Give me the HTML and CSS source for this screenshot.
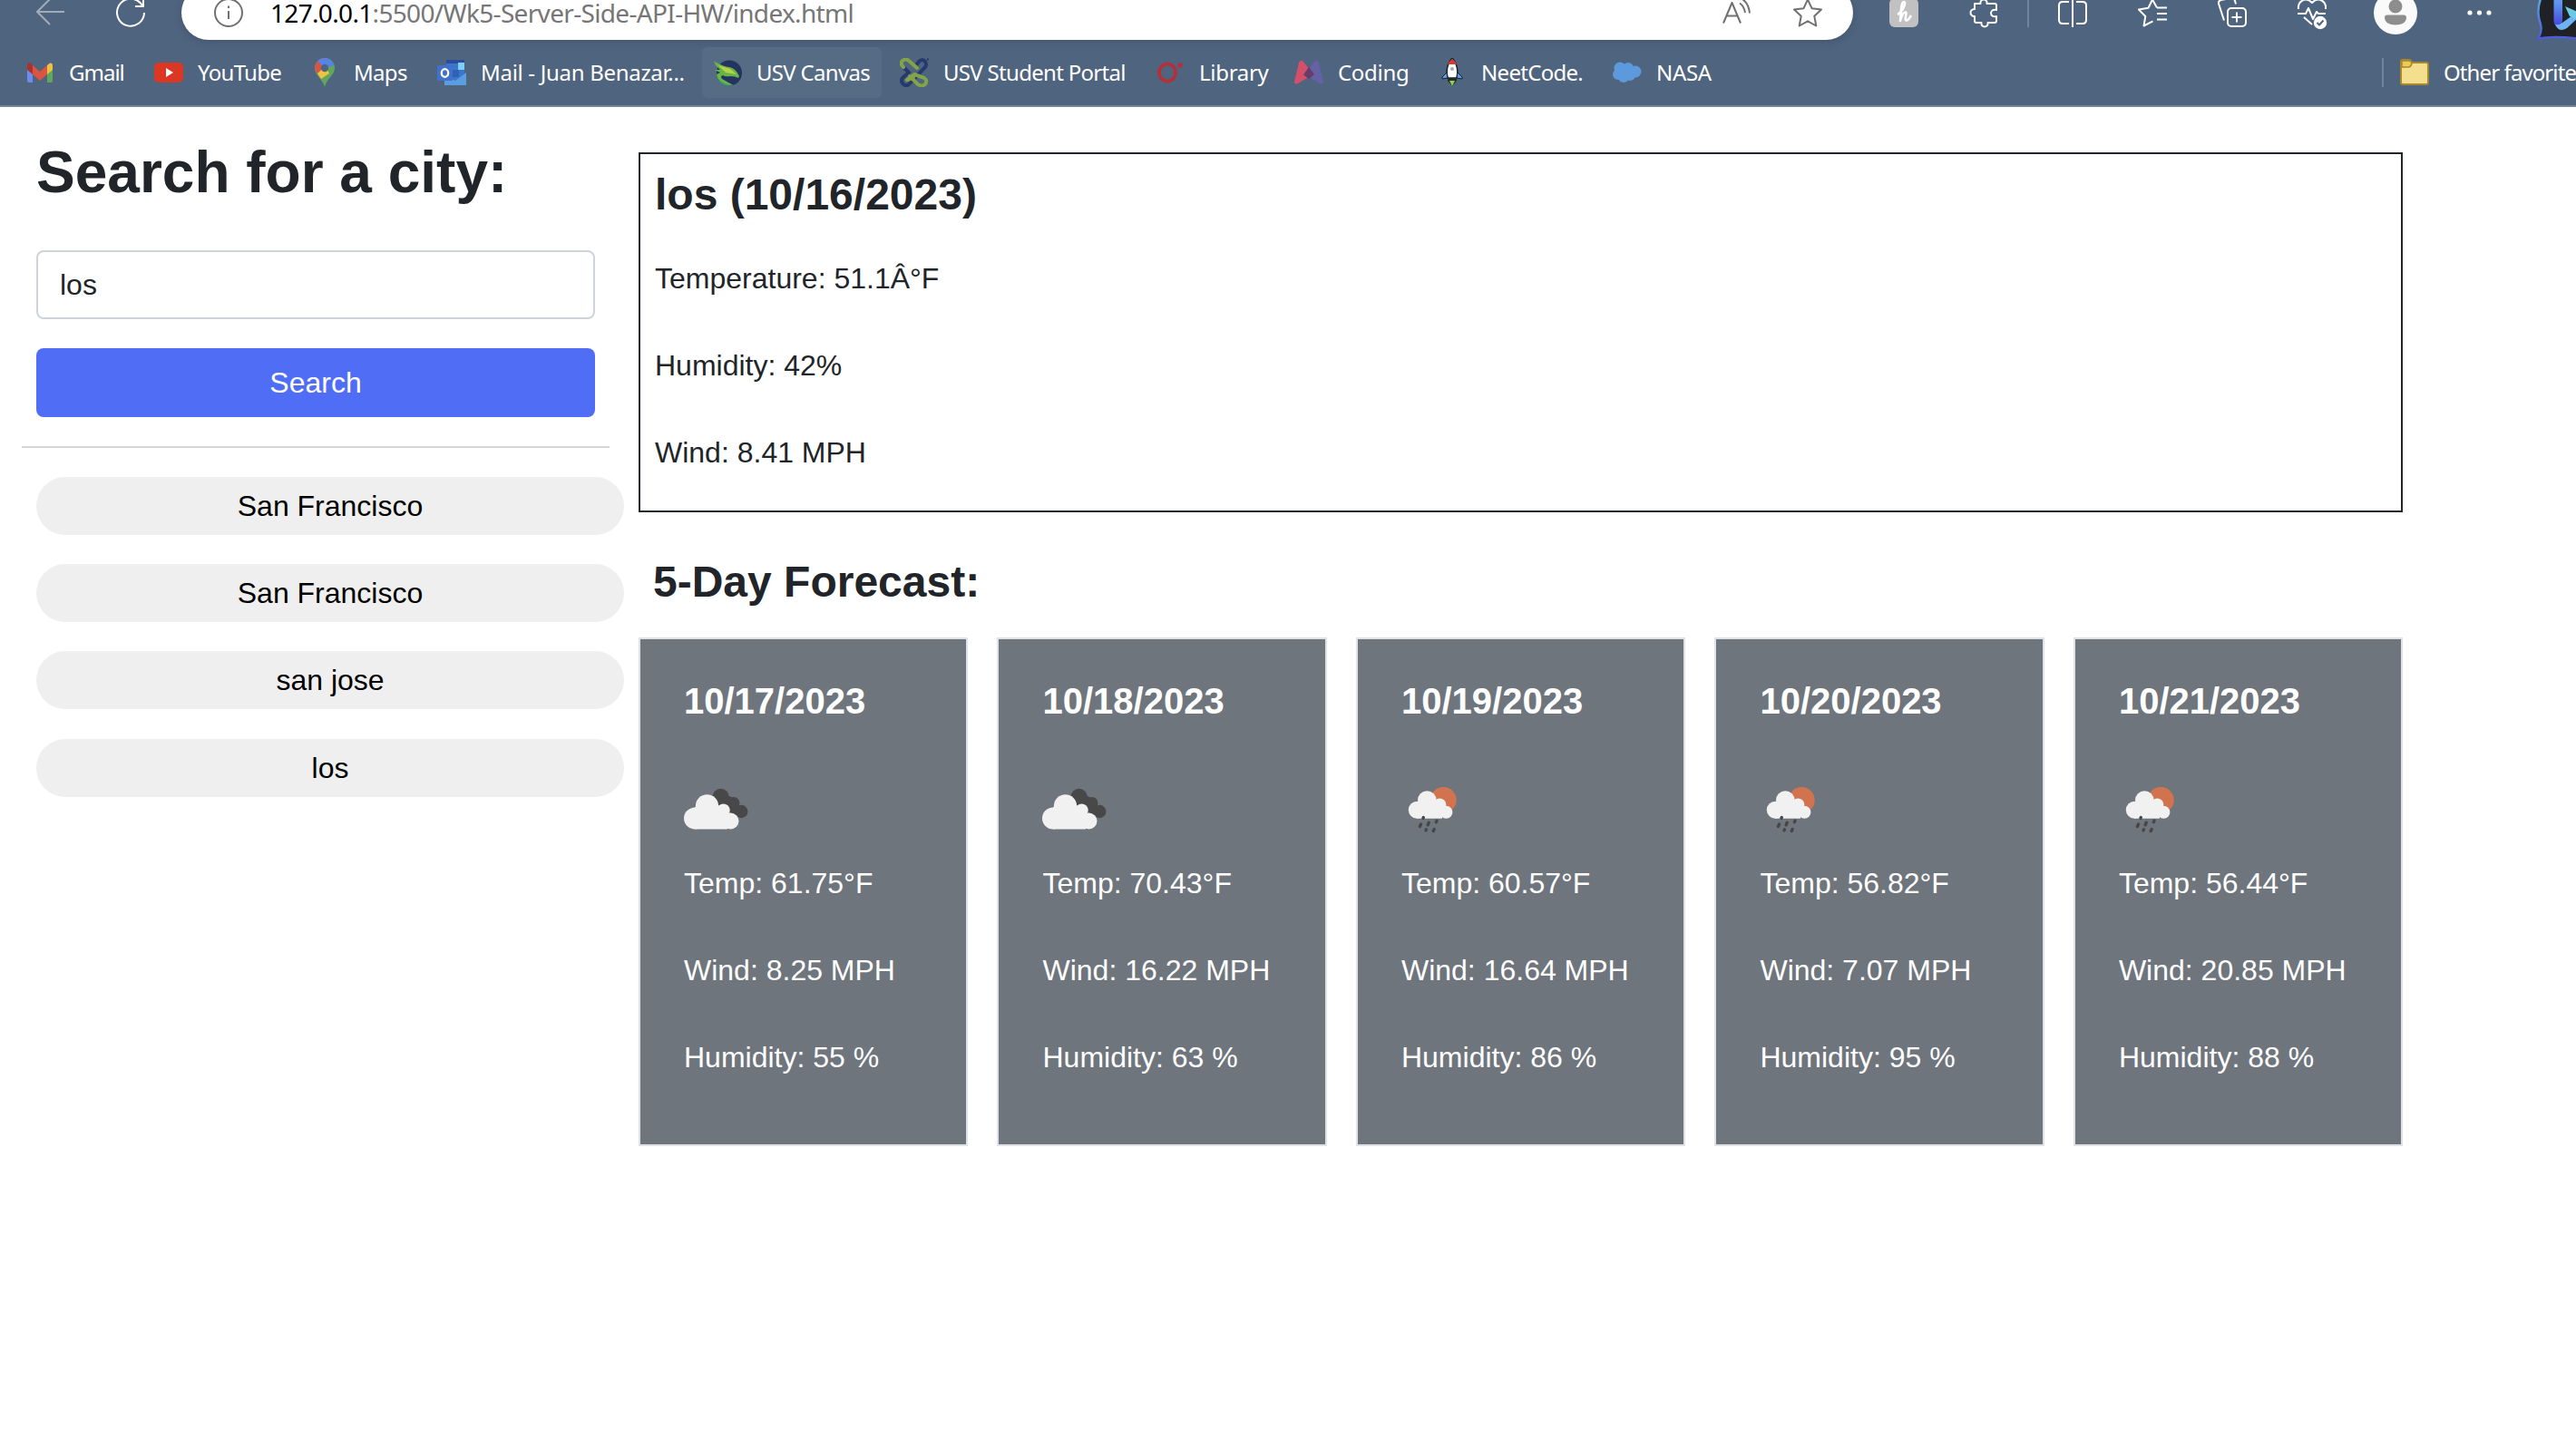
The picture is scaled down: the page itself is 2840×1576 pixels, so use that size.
FILE: index.html
```html
<!DOCTYPE html>
<html lang="en">
<head>
<meta charset="utf-8">
<title>Weather Dashboard</title>
<link rel="stylesheet" href="styles.css">
</head>
<body>
<svg class="defs" aria-hidden="true">
  <symbol id="cloudy" viewBox="0 0 80 64">
    <g fill="#484848"><circle cx="40.6" cy="19" r="9.2"/><circle cx="55" cy="25.5" r="6.5"/><circle cx="63.3" cy="35" r="7.2"/><path d="M38 12L58 22 66 41 56 40 40 27Z"/></g>
    <g fill="#f1f1f1"><circle cx="12" cy="42.5" r="12"/><circle cx="25.5" cy="29" r="12.7"/><circle cx="43.5" cy="33.6" r="7.2"/><circle cx="51.5" cy="45.5" r="9"/><path d="M12 30H48V54.5H12Z"/></g>
  </symbol>
  <symbol id="rain" viewBox="0 0 80 64">
    <circle cx="46.3" cy="22.4" r="14.4" fill="#d27350"/>
    <g fill="#f1f1f1"><circle cx="17.3" cy="33.2" r="9.5"/><circle cx="28.3" cy="22.6" r="10.3"/><circle cx="42.3" cy="27.5" r="7"/><circle cx="49.4" cy="35.7" r="7"/><path d="M17 24H45V42.7H17Z"/></g>
    <g stroke="#464646" stroke-width="3.4" stroke-linecap="round"><path d="M24 42.2l.3-.6M20.4 51.5l1.2-2.4M29.2 49.8l1-2.6M38.3 46.6l.8-1.4M27 55.8l.4-1M35.2 56.4l1-2"/></g>
  </symbol>
</svg>
<header class="browser">
  <div class="toolbar">
    <svg class="ic back" viewBox="0 0 32 32"><path d="M31 15H1.500M15 1L1 15l14 14"/></svg>
    <svg class="ic reload" viewBox="0 0 32 32"><path d="M31 16A15 15 0 1 1 27 5.500L30 9M30 0V9H21"/></svg>
    <div class="address">
      <svg class="ic info" viewBox="0 0 32 32"><circle cx="16" cy="16" r="15"/><path d="M16 14v9M16 8.500v2.500"/></svg>
      <span class="url"><b>127.0.0.1</b>:5500/Wk5-Server-Side-API-HW/index.html</span>
      <svg class="ic aloud" viewBox="0 0 32 32"><path d="M1 27.500L10.500 5 20 27.500M4.500 19.500H16.500M19 5.500Q24 9 25 16M22 1Q29 6 30 16.500"/></svg>
      <svg class="ic fav" viewBox="0 0 32 32"><path d="M16 1.500l4.500 9.700 10.500 1.300-7.700 7.300 2 10.700L16 25.300l-9.300 5.200 2-10.700L1 12.500l10.500-1.300z"/></svg>
    </div>
    <svg class="ic" viewBox="0 0 32 32"><rect width="32" height="32" rx="6" fill="#c1c1c1" stroke="none"/><path d="M9 18C15 15 19 4 16 4S13 14 12 25C13.500 18 16 15 18 15.500S16 24 18.500 24.500 22 22 24 19" stroke-width="2.600"/></svg>
    <svg class="ic" viewBox="0 0 32 32"><path d="M6 6h6.500c-1-6 8-6 7 0H28q2 0 2 2v5c-8-2-8 9 0 7v5q0 2-2 2h-7.500c1 6-8 6-7 0H8q-2 0-2-2v-5c-6 0-6-8 0-8z"/></svg>
    <i class="sep"></i>
    <svg class="ic" viewBox="0 0 32 32"><path d="M12 4H5q-4 0-4 4v16q0 4 4 4h7M20 4h7q4 0 4 4v16q0 4-4 4h-7M16 0v32"/></svg>
    <svg class="ic" viewBox="0 0 32 32"><path d="M21 10.500h11M21 17h11M21 23.500h11M21 10.500L16 1.500l-4.500 9.300L1 12.600l7.300 7.400L6.500 30.500l10-5.200"/></svg>
    <svg class="ic" viewBox="0 0 32 32"><rect x="11" y="11" width="20" height="20" rx="4"/><path d="M21 15.500v11M15.500 21h11M7 24.500L1 6Q.5 3 3.500 2L15 0q3 0 4 3l1 3.500"/></svg>
    <svg class="ic" viewBox="0 0 32 32"><path d="M1 12C0 3 9-2 16 5c7-7 16-2 15 7M0 17h9l3-6 5 12 4-8 2 2h8M7 21l9 8"/><circle cx="25" cy="27" r="7.200" fill="#fff" stroke="none"/><path d="M21.500 27l2.500 2.500 4.500-5" stroke="#4f647e"/></svg>
    <svg class="avatar" viewBox="0 0 48 48"><circle cx="24" cy="24" r="24" fill="#fafafa"/><circle cx="24" cy="17" r="7.500" fill="#8d8d8d"/><path d="M15 26.500h18q3 0 3 3c0 5-5 8-12 8s-12-3-12-8q0-3 3-3z" fill="#8d8d8d"/></svg>
    <svg class="ic dots" viewBox="0 0 32 32"><g fill="#fff" stroke="none"><circle cx="5" cy="16" r="2.600"/><circle cx="15.500" cy="16" r="2.600"/><circle cx="26" cy="16" r="2.600"/></g></svg>
    <svg class="bing" viewBox="0 0 60 60">
      <defs>
        <linearGradient id="rim" x1="0" y1="0" x2="0" y2="1"><stop offset=".3" stop-color="#5aa6e6"/><stop offset="1" stop-color="#4a55d6"/></linearGradient>
        <linearGradient id="stem" x1="0" y1="0" x2="0" y2="1"><stop offset=".3" stop-color="#5f97f2"/><stop offset="1" stop-color="#4646dc"/></linearGradient>
      </defs>
      <path d="M1.500 58.500Q6 50 4 43 1 34 1.500 28C2 10 14-6 36-6H70V62Q24 54 1.500 58.500z" fill="#202124" stroke="url(#rim)" stroke-width="2.500"/>
      <path d="M18.500 8l9.500 4v28q-1 4-5 4-4.500 0-4.500-5z" fill="url(#stem)"/>
      <path d="M19.500 42q3 3 8.500-1l14-10 4 4-13 12q-9 6-13.500-5z" fill="#6fb2f3"/>
      <path d="M31 23l14 6v9l-9-4z" fill="#68cbe6"/>
    </svg>
  </div>
  <nav class="bookmarks">
    <a class="bm tight"><svg class="bi" viewBox="0 0 32 32"><path d="M2 8h6v19H4q-2 0-2-2z" fill="#6c8cee"/><path d="M24 8h6v17q0 2-2 2h-4z" fill="#5fa85b"/><path d="M24 8l3-2.500q3-.5 3 3V13l-6 5z" fill="#edc242"/><path d="M2 13V8q0-3.500 3.500-2.500L8 8v10z" fill="#a8322c"/><path d="M8 8l8 7 8-7v10l-8 7-8-7z" fill="#d95441"/></svg>Gmail</a>
    <a class="bm snug"><svg class="bi" viewBox="0 0 32 32"><rect y="5" width="32" height="22" rx="5" fill="#dc3625"/><path d="M13 11v10l8-5z" fill="#fff"/></svg>YouTube</a>
    <a class="bm snug"><svg class="bi" viewBox="0 0 32 32"><path d="M5 11A11 11 0 0 1 27 11C27 19 19 21 16 32 13 22 5 19 5 11" fill="#61a65b"/><path d="M5 11A11 11 0 0 1 20 .8L9 18Q5 14 5 11" fill="#d75546"/><path d="M8 3.500A11 11 0 0 1 26.500 8L16 11z" fill="#5683e8"/><path d="M8 17l9-8 4 8-9 6z" fill="#ecc443"/><circle cx="16" cy="11" r="4.200" fill="#4f647e"/></svg>Maps</a>
    <a class="bm"><svg class="bi" viewBox="0 0 32 32"><path d="M10 2h20v26H10z" fill="#3976cc"/><path d="M10 2h20v4H10z" fill="#2b4d9b"/><path d="M23 5h7v8h-7z" fill="#80cdf5"/><path d="M17 13h7v8h-7z" fill="#2e62b5"/><path d="M8 20l12 5 12-9v14H8z" fill="#5a9ee0"/><rect y="8" width="17" height="17" rx="1.500" fill="#4171ca"/><ellipse cx="8.500" cy="16.500" rx="3.700" ry="4.300" fill="none" stroke="#fff" stroke-width="2.300"/></svg>Mail - Juan Benazar...</a>
    <a class="bm hover snug"><svg class="bi" viewBox="0 0 32 32"><circle cx="18" cy="16.500" r="14" fill="#24345f"/><path d="M5 22q8 1 12 6l4 2q-11 3-16-8z" fill="#3f9c6e"/><path d="M1 3.500q11 6 17 6.500 7 1 11 10l-1 2q-4-2-8-2-7 1-9-1-4 1 0 5l12 6Q12 30 5 22l-1-4 4-2-6-3 6 0-5-5z" fill="#69b446"/><path d="M6 8l13 4 7 6-12-2z" fill="#b4d34b"/></svg>USV Canvas</a>
    <a class="bm snug"><svg class="bi" viewBox="0 0 32 32"><g fill="none" stroke-width="4" stroke-linecap="round" stroke-linejoin="round"><path d="M18 8l3-4q4-4 7 0 2 3 0 6L12 27q-4 5-8 2-4-4 0-8l6-5-6-6" stroke="#263a6b"/><path d="M4 10Q0 6 3 3q4-3 7 0l9 8M15 21l-6 3M8 24l8-6 11 4q4 3 1 7-4 3-8 0l-9-9" stroke="#82a447"/></g><circle cx="31" cy="1.500" r="1.200" fill="#263a6b"/></svg>USV Student Portal</a>
    <a class="bm"><svg class="bi" viewBox="0 0 32 32"><ellipse cx="13" cy="16" rx="9" ry="9.500" fill="none" stroke="#b92d36" stroke-width="3.600"/><circle cx="27" cy="8" r="2.700" fill="#b92d36"/></svg>Library</a>
    <a class="bm"><svg class="bi" viewBox="0 0 32 32"><path d="M5 5q2-4 5-1l11 14-17 10q-4 2-4-2z" fill="#d2506a"/><path d="M27 5q-2-4-5-1L11 18l17 10q4 2 4-2z" fill="#6461a5"/><path d="M16 10l6 8-6 5-6-4.500z" fill="#683b68"/></svg>Coding</a>
    <a class="bm snug"><svg class="bi" viewBox="0 0 32 32"><path d="M16 0q8 9 5 22H11Q8 9 16 0" fill="#fff" stroke="#17212b" stroke-width="1.500"/><path d="M16 1q4 3 5 6H11q1-3 5-6" fill="#d53b31"/><circle cx="16" cy="12" r="2" fill="#aaa"/><path d="M10 16l-5 5v2l6-1zM22 16l5 5v2l-6-1z" fill="#5c9ee8" stroke="#17212b"/><path d="M11 22h10v3l-5 6-5-6z" fill="#252a2c"/><path d="M13 25h6l-3 6z" fill="#8dd84a"/></svg>NeetCode.</a>
    <a class="bm"><svg class="bi" viewBox="0 0 32 32"><g fill="#5d9add"><circle cx="8" cy="11" r="6.500"/><circle cx="17" cy="11" r="6"/><circle cx="25" cy="15" r="6.500"/><circle cx="6" cy="18" r="6"/><circle cx="12" cy="21" r="6"/><circle cx="19" cy="19" r="6"/></g></svg>NASA</a>
    <i class="sep"></i>
    <a class="other"><svg class="bi" viewBox="0 0 32 32"><path d="M1 7V4q0-2 2-2h7q2 0 3 3h16q2 0 2 2v20q0 2-2 2H3q-2 0-2-2z" fill="#f3df8d" stroke="#a8872e" stroke-width="2"/><path d="M2 9V4q0-1 1-1h7q2 0 3 3-1 4-4 4H2z" fill="#e9cc55" stroke="#a8872e" stroke-width="1.500"/></svg>Other favorites</a>
  </nav>
</header>
<main class="page">
  <aside class="sidebar">
    <h1>Search for a city:</h1>
    <input class="field" type="text" value="los">
    <button class="search">Search</button>
    <hr class="rule">
    <div class="history">
      <button class="pill">San Francisco</button>
      <button class="pill">San Francisco</button>
      <button class="pill">san jose</button>
      <button class="pill">los</button>
    </div>
  </aside>
  <section class="results">
    <div class="current">
      <h2>los (10/16/2023)</h2>
      <p>Temperature: 51.1Â°F</p>
      <p>Humidity: 42%</p>
      <p>Wind: 8.41 MPH</p>
    </div>
    <h2 class="heading">5-Day Forecast:</h2>
    <div class="cards">
      <article class="card"><h3>10/17/2023</h3><svg class="weather"><use href="#cloudy"/></svg><p>Temp: 61.75°F</p><p>Wind: 8.25 MPH</p><p>Humidity: 55 %</p></article>
      <article class="card"><h3>10/18/2023</h3><svg class="weather"><use href="#cloudy"/></svg><p>Temp: 70.43°F</p><p>Wind: 16.22 MPH</p><p>Humidity: 63 %</p></article>
      <article class="card"><h3>10/19/2023</h3><svg class="weather"><use href="#rain"/></svg><p>Temp: 60.57°F</p><p>Wind: 16.64 MPH</p><p>Humidity: 86 %</p></article>
      <article class="card"><h3>10/20/2023</h3><svg class="weather"><use href="#rain"/></svg><p>Temp: 56.82°F</p><p>Wind: 7.07 MPH</p><p>Humidity: 95 %</p></article>
      <article class="card"><h3>10/21/2023</h3><svg class="weather"><use href="#rain"/></svg><p>Temp: 56.44°F</p><p>Wind: 20.85 MPH</p><p>Humidity: 88 %</p></article>
    </div>
  </section>
</main>
</body>
</html>
```
FILE: styles.css
```css
* { box-sizing: border-box; }
html { overflow: hidden; }
body { margin: 0; height: 1576px; overflow: hidden; background: #fff; color: #212529; font: 32px/48px "Liberation Sans", Arial, sans-serif; }
h1, h2, h3, p { margin: 0; }
.defs { position: absolute; width: 0; height: 0; }

/* Browser chrome */
.browser { height: 118px; overflow: hidden; background: #4f647e; border-bottom: 2px solid #71849e; font-family: "Noto Sans", sans-serif; color: #fff; }
.toolbar { display: flex; align-items: center; height: 60px; margin-top: -16px; padding-left: 40px; }
.toolbar > * { flex: none; }
.ic { display: block; width: 32px; height: 32px; flex: none; overflow: visible; fill: none; stroke: #fff; stroke-width: 2; stroke-linejoin: round; margin-right: 56px; }
.back { stroke: #a0acba; }
.reload { margin-right: 40px; }
.address { display: flex; align-items: center; width: 1843px; height: 60px; margin-right: 40px; padding: 0 34px 0 36px; background: #fff; border-radius: 30px; box-shadow: 0 2px 8px rgba(30, 45, 70, .25); }
.address .ic { stroke: #707070; margin-right: 0; }
.url { flex: 1; margin-left: 30px; font-size: 28px; line-height: 34px; letter-spacing: -.67px; color: #767676; white-space: nowrap; }
.url b { font-weight: 400; color: #000; }
.address .aloud { margin-right: 46px; }
.sep { width: 2px; height: 32px; background: #71849e; }
.toolbar .sep { margin: 0 32px 0 -24px; }
.avatar { width: 48px; height: 48px; margin: 0 53px 0 -4px; }
.dots { margin-right: 47px; }
.bing { width: 60px; height: 60px; overflow: visible; }
.bookmarks { display: grid; grid-template-columns: 142px 172px 140px 304px 206px 282px 153px 158px 193px 860px 20px 220px; align-items: center; margin-top: 8px; padding-left: 16px; font-size: 24px; }
.bm, .other { display: flex; align-items: center; gap: 16px; height: 56px; padding: 0 12px; white-space: nowrap; line-height: 56px; letter-spacing: -.3px; }
.bm.snug { letter-spacing: -.7px; }
.bm.tight { letter-spacing: -1px; }
.other { padding-left: 0; letter-spacing: -.9px; }
.hover { width: 198px; border-radius: 6px; background: #566b84; }
.bi { width: 32px; height: 32px; flex: none; }

/* Weather dashboard */
.page { display: flex; }
.sidebar { display: flex; flex-direction: column; width: 704px; padding: 34px 16px 0 40px; }
h1 { font-size: 64px; line-height: 76px; margin-bottom: 48px; }
.field { width: 616px; height: 76px; padding: 0 24px; border: 2px solid #ced4da; border-radius: 8px; background: #fff; color: #212529; font: inherit; }
.search { width: 616px; height: 76px; margin-top: 32px; padding: 0; border: 0; border-radius: 8px; background: #506ef5; color: #fff; font: inherit; }
.rule { width: 648px; height: 2px; margin: 32px 0 32px -16px; border: 0; background: #d5d6d7; }
.history { display: flex; flex-direction: column; gap: 32.2px; }
.pill { width: 648px; height: 64px; padding: 0; border: 0; border-radius: 32px; background: #efefef; color: #000; font: inherit; }
.results { width: 1945.400px; padding-top: 50px; }
.current { height: 397px; border: 2px solid #212529; padding: 16px; }
h2 { font-size: 48px; line-height: 57.6px; }
.current h2 { margin-bottom: 39px; }
p + p { margin-top: 48px; }
.heading { margin: 48px 0 32px 16px; }
.cards { display: grid; grid-template-columns: repeat(5, 1fr); gap: 32px; }
.card { height: 561px; padding: 44.300px 0 0 48px; border: 2px solid #dee2e6; background: #6e757d; color: #fff; }
h3 { font-size: 40px; line-height: 48px; }
.weather { display: block; width: 80px; height: 64px; margin: 63px 0 26px; overflow: visible; }
```
